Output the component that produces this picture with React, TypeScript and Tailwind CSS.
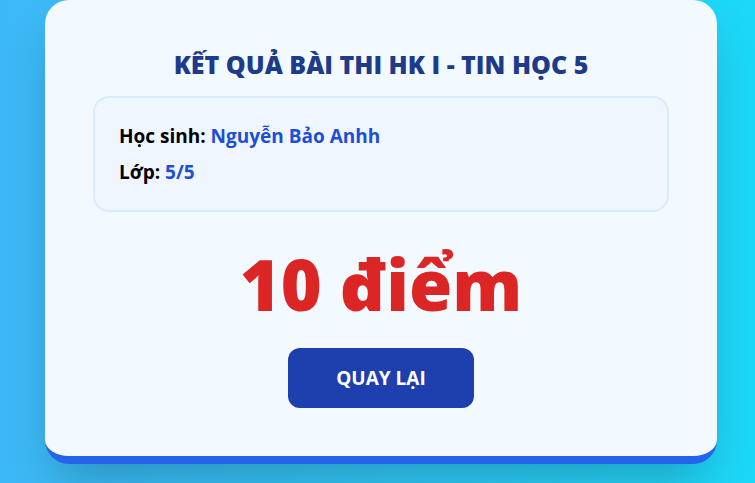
export default function App() {
  return (
    <div className="min-h-screen w-full bg-gradient-to-r from-[#3db8f6] to-[#1cd8f8] flex justify-center pl-[7px] font-['Open_Sans',sans-serif]">
      <div className="w-[672px] h-fit rounded-3xl bg-[#f3faff] border-b-8 border-[#2563eb] shadow-2xl p-12 text-center">
        <h1 className="text-[25px] leading-8 font-extrabold text-[#1e3a8a] mb-4">
          KẾT QUẢ BÀI THI HK I - TIN HỌC 5
        </h1>

        <div className="rounded-2xl border-2 border-[#dbeafe] bg-[#eff6ff] p-6 text-left space-y-2">
          <p className="text-[19px] leading-7 font-bold text-black">
            Học sinh: <span className="text-[#1d4ed8]">Nguyễn Bảo Anhh</span>
          </p>
          <p className="text-[19px] leading-7 font-bold text-black">
            Lớp: <span className="text-[#1d4ed8]">5/5</span>
          </p>
        </div>

        <div className="mt-[37px] mb-[29px] text-[70px] leading-none font-extrabold text-[#dc2626]">10 điểm</div>

        <button className="w-[186px] rounded-xl bg-[#1e40af] py-4 text-[19px] leading-7 font-bold text-white">
          QUAY LẠI
        </button>
      </div>
    </div>
  )
}
